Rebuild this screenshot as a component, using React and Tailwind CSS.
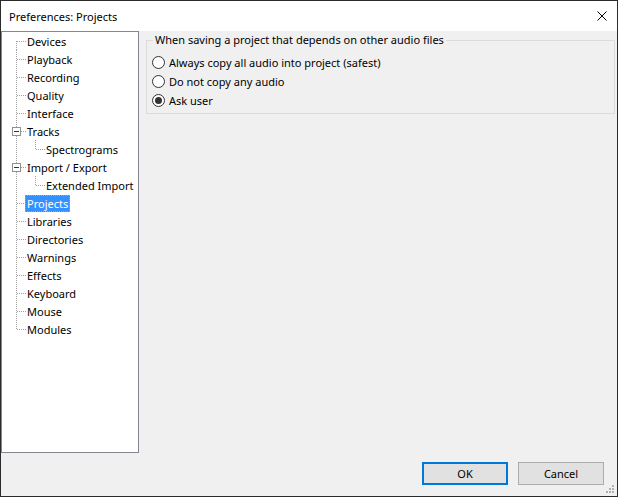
import React from "react";

const FONT = { fontFamily: '"Noto Sans", "Liberation Sans", sans-serif' };

function Connector({ level, first, last, expander, parentLast }) {
  const w = level === 1 ? 25 : 44;
  const dot = { stroke: "#a0a0a0", strokeWidth: 1, strokeDasharray: "1 1", fill: "none" };
  return (
    <svg width={w} height="18" className="shrink-0 block">
      {level === 1 && (
        <>
          <line x1="14.5" y1={first ? 9 : 0} x2="14.5" y2={last ? 10 : 18} style={dot} />
          <line x1={expander ? 19 : 15} y1="9.5" x2="24" y2="9.5" style={dot} />
          {expander && (
            <>
              <rect x="10.5" y="5.5" width="8" height="8" fill="#fff" stroke="#919191" />
              <line x1="12" y1="9.5" x2="17" y2="9.5" stroke="#333" strokeWidth="1" />
            </>
          )}
        </>
      )}
      {level === 2 && (
        <>
          {!parentLast && <line x1="14.5" y1="0" x2="14.5" y2="18" style={dot} />}
          <line x1="33.5" y1="0" x2="33.5" y2="10" style={dot} />
          <line x1="34" y1="9.5" x2="43" y2="9.5" style={dot} />
        </>
      )}
    </svg>
  );
}

const items = [
  { label: "Devices", level: 1, first: true },
  { label: "Playback", level: 1 },
  { label: "Recording", level: 1 },
  { label: "Quality", level: 1 },
  { label: "Interface", level: 1 },
  { label: "Tracks", level: 1, expander: true },
  { label: "Spectrograms", level: 2 },
  { label: "Import / Export", level: 1, expander: true },
  { label: "Extended Import", level: 2 },
  { label: "Projects", level: 1, selected: true },
  { label: "Libraries", level: 1 },
  { label: "Directories", level: 1 },
  { label: "Warnings", level: 1 },
  { label: "Effects", level: 1 },
  { label: "Keyboard", level: 1 },
  { label: "Mouse", level: 1 },
  { label: "Modules", level: 1, last: true },
];

function Radio({ checked, label }) {
  return (
    <div className="flex items-center h-[19px]">
      <span className="w-[13px] h-[13px] rounded-full border border-[#333333] bg-white flex items-center justify-center shrink-0">
        {checked && <span className="w-[7px] h-[7px] rounded-full bg-[#333333]" />}
      </span>
      <span className="ml-[4px] text-[11px] text-black leading-none">{label}</span>
    </div>
  );
}

export default function App() {
  return (
    <div
      style={FONT}
      className="w-[618px] h-[497px] border border-[#2b2b2b] bg-[#f0f0f0] flex flex-col text-black overflow-hidden"
    >
      {/* Title bar */}
      <div className="h-[30px] bg-white flex items-center justify-between pl-[8px] pr-[10px] shrink-0">
        <span className="text-[11px] leading-none">Preferences: Projects</span>
        <svg width="10" height="10" viewBox="0 0 10 10" className="block">
          <path d="M0.5 0.5 L9.5 9.5 M9.5 0.5 L0.5 9.5" stroke="#000" strokeWidth="1" fill="none" />
        </svg>
      </div>

      {/* Body */}
      <div className="flex flex-1 min-h-0">
        {/* Tree */}
        <div className="w-[138px] h-[422px] bg-white border border-[#828790] shrink-0">
          {items.map((it) => (
            <div key={it.label} className="flex items-center h-[18px]">
              <Connector {...it} />
              {it.selected ? (
                <span className="ml-[-2px] h-[17px] px-[1px] flex items-center bg-[#3390ff] text-white border border-dotted border-[#d8a040] text-[11px] leading-none">
                  {it.label}
                </span>
              ) : (
                <span className="text-[11px] leading-none whitespace-nowrap">{it.label}</span>
              )}
            </div>
          ))}
        </div>

        {/* Panel */}
        <div className="flex-1 pl-[7px] pr-[2px] pt-[9px]">
          <div className="relative border border-[#dcdcdc] h-[74px] pl-[5px] pt-[12px]">
            <span className="absolute left-[6px] top-[-8px] px-[2px] bg-[#f0f0f0] text-[11px] leading-[14px]">
              When saving a project that depends on other audio files
            </span>
            <Radio label="Always copy all audio into project (safest)" />
            <Radio label="Do not copy any audio" />
            <Radio label="Ask user" checked />
          </div>
        </div>
      </div>

      {/* Buttons */}
      <div className="h-[43px] shrink-0 flex items-start justify-end pt-[9px] pr-[1px]">
        <button className="w-[86px] h-[23px] border-2 border-[#0078d7] bg-[#e1e1e1] text-[11px] leading-none">
          OK
        </button>
        <button className="ml-[10px] w-[86px] h-[23px] border border-[#adadad] bg-[#e1e1e1] text-[11px] leading-none">
          Cancel
        </button>
        <svg width="12" height="12" className="self-end block mb-[1px]">
          <rect x="8" y="2" width="2" height="2" fill="#b0b0b0" />
          <rect x="5" y="5" width="2" height="2" fill="#b0b0b0" />
          <rect x="8" y="5" width="2" height="2" fill="#b0b0b0" />
          <rect x="2" y="8" width="2" height="2" fill="#b0b0b0" />
          <rect x="5" y="8" width="2" height="2" fill="#b0b0b0" />
          <rect x="8" y="8" width="2" height="2" fill="#b0b0b0" />
        </svg>
      </div>
    </div>
  );
}
